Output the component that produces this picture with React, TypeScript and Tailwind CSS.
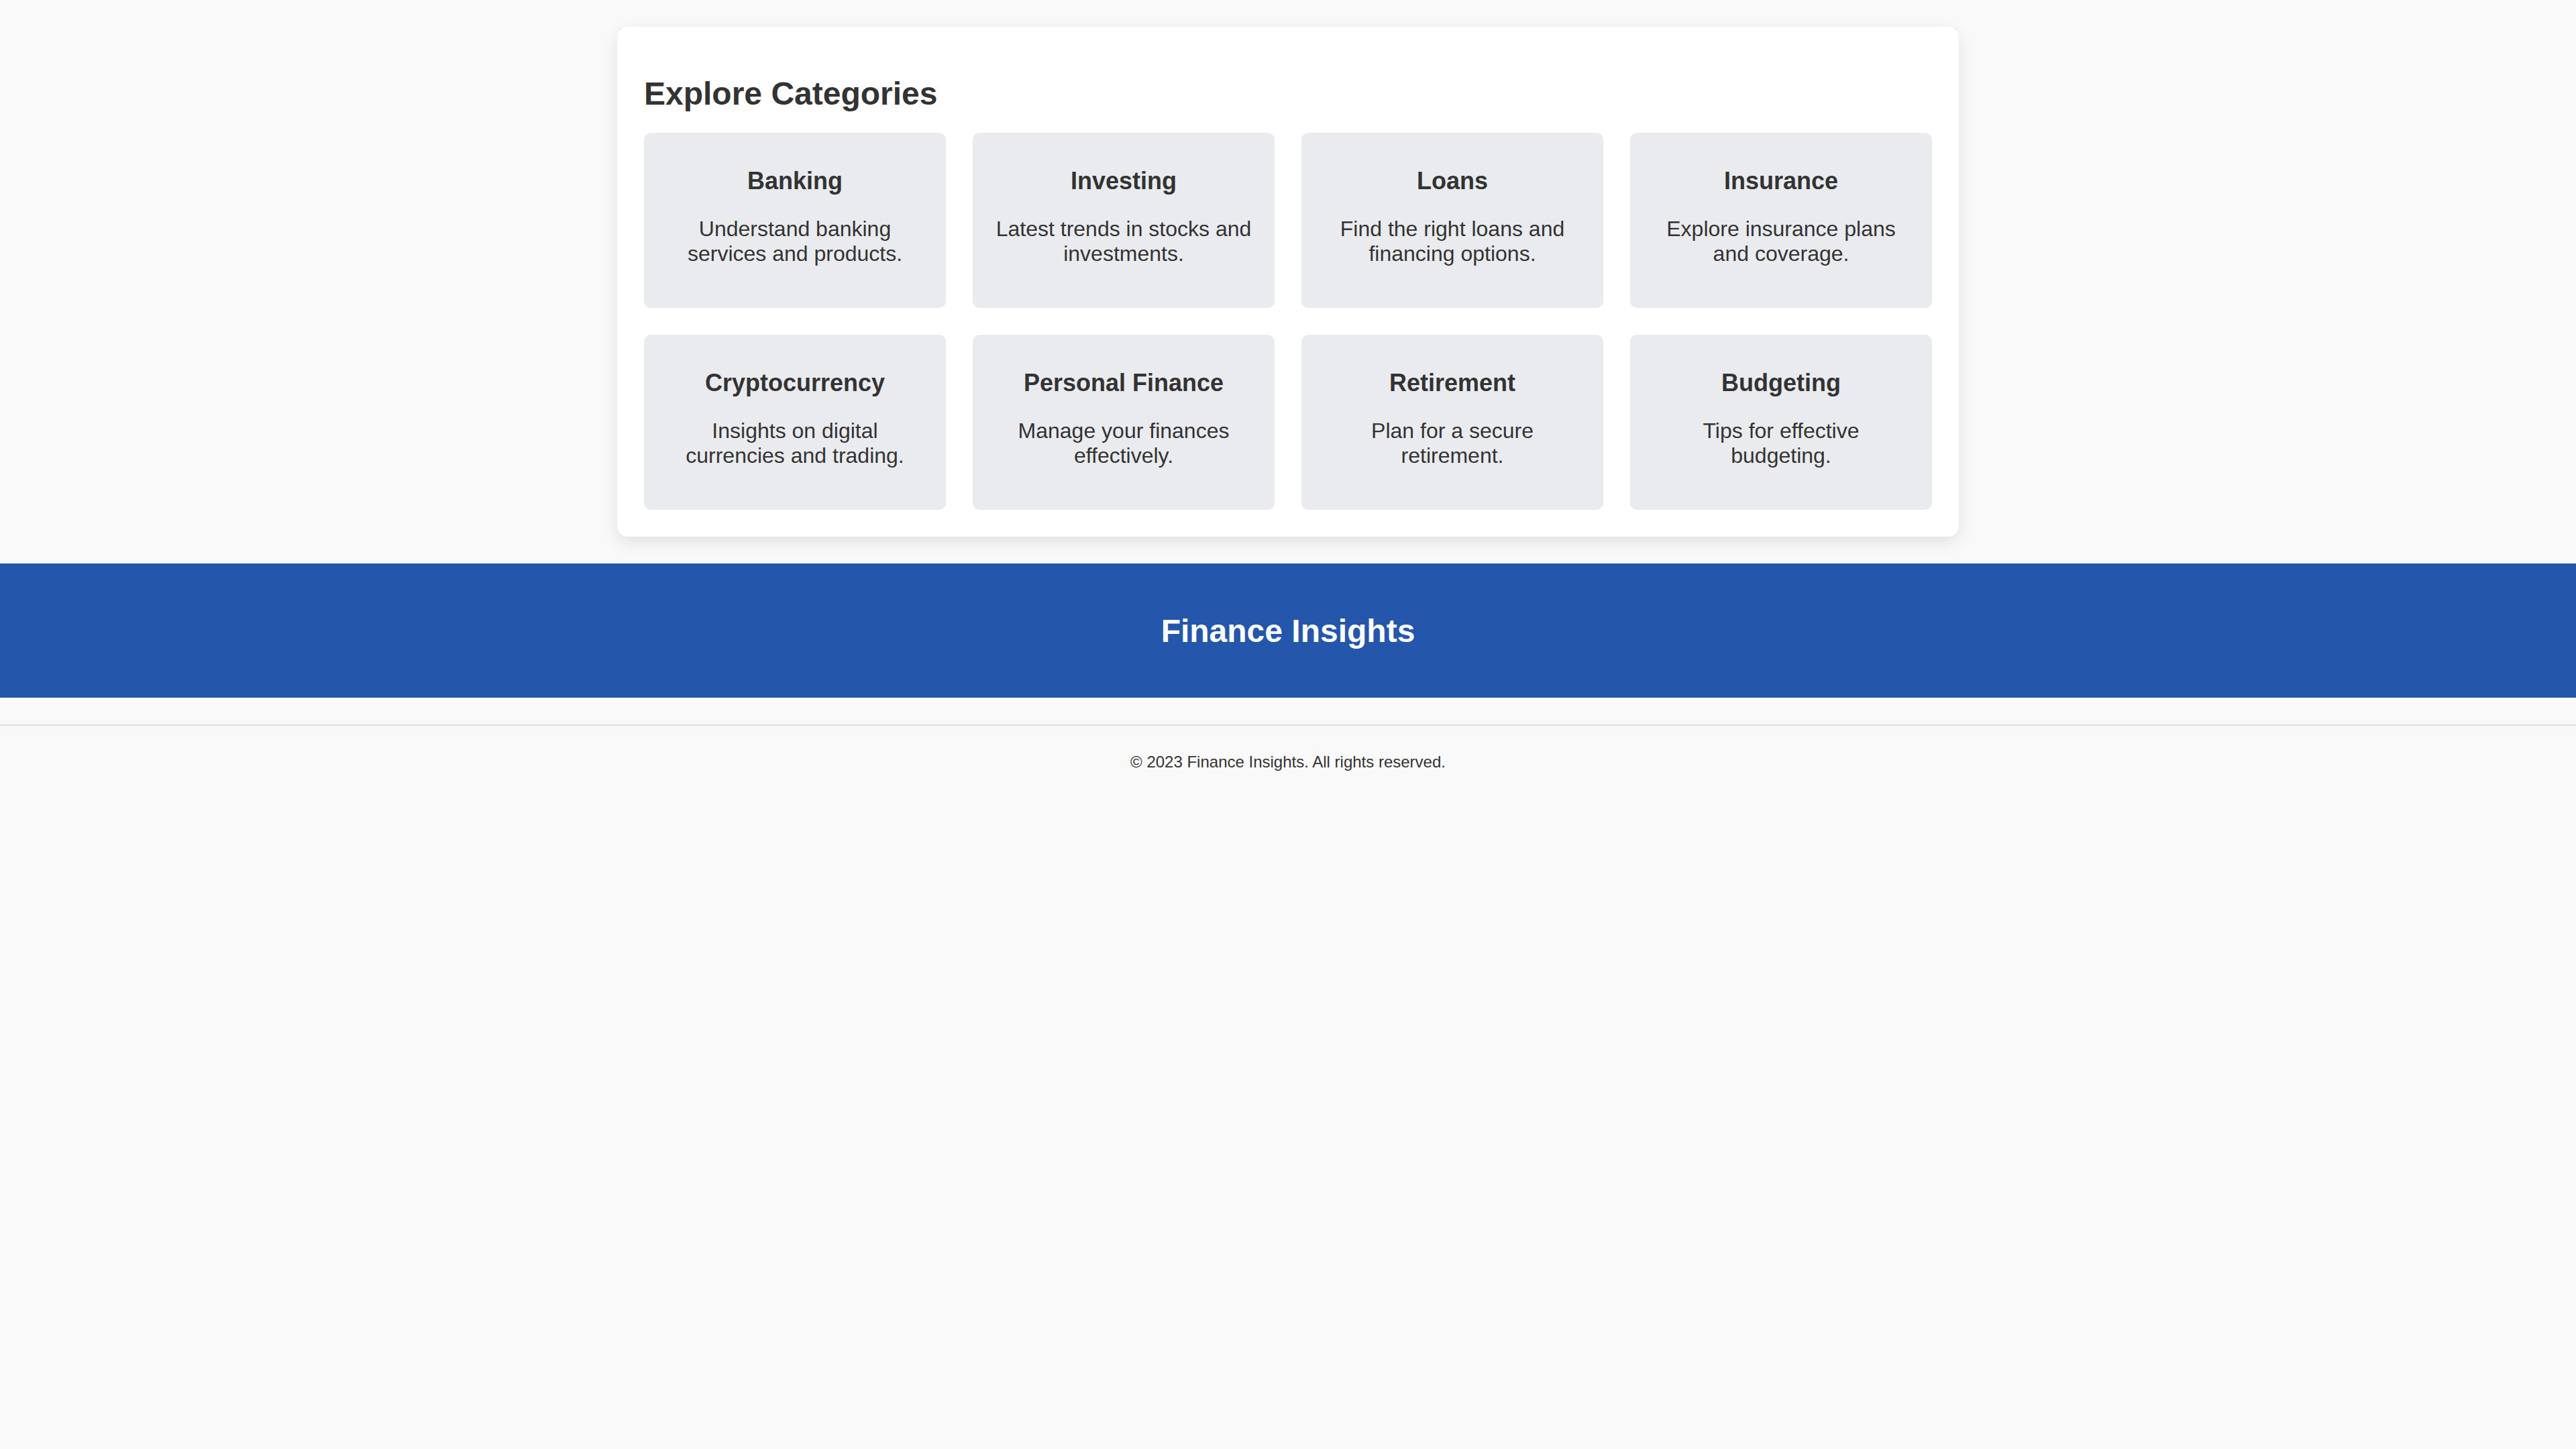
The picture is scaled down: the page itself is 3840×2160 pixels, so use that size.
const categories = [
  { title: 'Banking', text: 'Understand banking services and products.' },
  { title: 'Investing', text: 'Latest trends in stocks and investments.' },
  { title: 'Loans', text: 'Find the right loans and financing options.' },
  { title: 'Insurance', text: 'Explore insurance plans and coverage.' },
  { title: 'Cryptocurrency', text: 'Insights on digital currencies and trading.' },
  { title: 'Personal Finance', text: 'Manage your finances effectively.' },
  { title: 'Retirement', text: 'Plan for a secure retirement.' },
  { title: 'Budgeting', text: 'Tips for effective budgeting.' },
];

function CategoryCard({ title, text }: { title: string; text: string }) {
  return (
    <div className="bg-[#eaebee] rounded-[10px] px-[34px] pt-[51px] pb-[62px] text-center">
      <h3 className="text-[36px] font-bold leading-[normal] text-[#333]">{title}</h3>
      <p className="mt-[32px] text-[32px] leading-[normal] text-[#333]">{text}</p>
    </div>
  );
}

export default function App() {
  return (
    <div className="min-h-screen bg-[#f9f9f9] font-['Liberation_Sans',Arial,sans-serif] text-[#333]">
      <main className="pt-[40px]">
        <section className="w-[2000px] mx-auto bg-white rounded-[16px] shadow-[0_8px_24px_rgba(0,0,0,0.1)] px-[40px] pt-[72px] pb-[40px]">
          <h2 className="text-[48px] font-bold leading-[normal] mb-[31px]">Explore Categories</h2>
          <div className="grid grid-cols-4 gap-[40px]">
            {categories.map((c) => (
              <CategoryCard key={c.title} title={c.title} text={c.text} />
            ))}
          </div>
        </section>
      </main>

      <div className="mt-[40px] h-[200px] bg-[#2456ac] flex items-center justify-center">
        <h1 className="text-[48px] font-bold leading-[normal] text-white">Finance Insights</h1>
      </div>

      <footer className="mt-[40px] border-t-2 border-[#dddddd] pt-[40px] pb-[40px] text-center">
        <p className="text-[24px] leading-[normal] text-[#333]">© 2023 Finance Insights. All rights reserved.</p>
      </footer>
    </div>
  );
}
